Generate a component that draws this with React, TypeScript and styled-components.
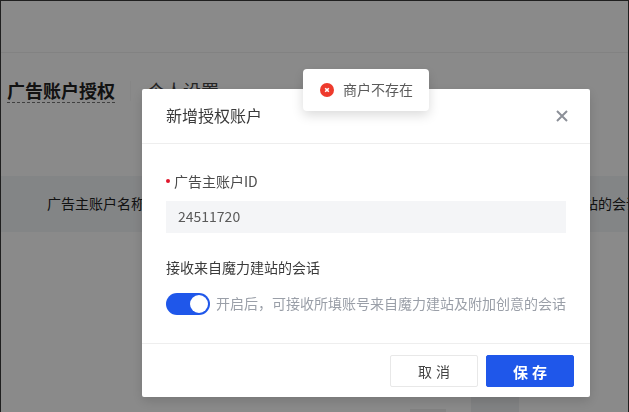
import React from 'react';
import styled, { createGlobalStyle } from 'styled-components';

const GlobalStyle = createGlobalStyle`
  html, body {
    margin: 0;
    padding: 0;
    height: 100%;
    overflow: hidden;
    background: #fff;
    font-family: "Noto Sans CJK SC", "Noto Sans", sans-serif;
  }
  * {
    box-sizing: border-box;
  }
`;

const App: React.FC = () => {
  return (
    <>
      <GlobalStyle />
      <Page>
        <TopBar />
        <Tabs>
          <ActiveTab>广告账户授权</ActiveTab>
          <TabDivider />
          <Tab>个人设置</Tab>
        </Tabs>
        <TableHead>
          <HeadCell>广告主账户名称</HeadCell>
          <HeadCell>接收来自魔力建站的会话</HeadCell>
        </TableHead>
        <Pager>
          <PagerItem />
          <PagerButton />
        </Pager>
      </Page>

      <Overlay />

      <Modal>
        <ModalHeader>
          <ModalTitle>新增授权账户</ModalTitle>
          <CloseButton aria-label="关闭">
            <svg width="12" height="12" viewBox="0 0 12 12" fill="none">
              <path d="M1 1l10 10M11 1L1 11" stroke="#8c9098" strokeWidth="2" />
            </svg>
          </CloseButton>
        </ModalHeader>

        <ModalBody>
          <FieldLabel required>广告主账户ID</FieldLabel>
          <TextInput defaultValue="24511720" />
          <SwitchLabel>接收来自魔力建站的会话</SwitchLabel>
          <SwitchRow>
            <Switch>
              <SwitchThumb />
            </Switch>
            <Hint>开启后，可接收所填账号来自魔力建站及附加创意的会话</Hint>
          </SwitchRow>
        </ModalBody>

        <ModalFooter>
          <Button>取消</Button>
          <Button primary>保存</Button>
        </ModalFooter>
      </Modal>

      <Toast>
        <svg width="14" height="14" viewBox="0 0 14 14">
          <circle cx="7" cy="7" r="7" fill="#ee3a2c" />
          <path d="M5.2 5.2l3.6 3.6M8.8 5.2l-3.6 3.6" stroke="#fff" strokeWidth="1.6" />
        </svg>
        <ToastText>商户不存在</ToastText>
      </Toast>
    </>
  );
};

const Page = styled.div`
  height: 412px;
  overflow: hidden;
  border: 1px solid #3a3a3a;
  border-bottom: none;
  background: #fff;
`;

const TopBar = styled.div`
  height: 52px;
  border-bottom: 1px solid #f0f0f0;
`;

const Tabs = styled.div`
  display: flex;
  align-items: flex-start;
  margin-top: 25px;
  padding-left: 6px;
`;

const ActiveTab = styled.div`
  font-size: 18px;
  line-height: 24px;
  font-weight: 700;
  color: #222;
  border-bottom: 1px dashed #777;
`;

const TabDivider = styled.div`
  width: 1px;
  height: 20px;
  margin: 3px 19px 0 15px;
  background: #f8f8f8;
`;

const Tab = styled.div`
  margin-left: -3px;
  font-size: 18px;
  line-height: 24px;
  color: #444;
`;

const TableHead = styled.div`
  display: grid;
  grid-template-columns: 439px 1fr;
  align-items: center;
  height: 56px;
  margin-top: 73px;
  padding-left: 46px;
  background: #f3f5f8;
`;

const HeadCell = styled.div`
  padding-bottom: 3px;
  font-size: 14px;
  white-space: nowrap;
  color: #222;
`;

const Pager = styled.div`
  display: flex;
  align-items: flex-start;
  margin-top: 165px;
  padding-left: 409px;
`;

const PagerItem = styled.div`
  width: 36px;
  height: 4px;
  margin-top: 12px;
  background: #eeeeee;
`;

const PagerButton = styled.div`
  width: 48px;
  height: 16px;
  margin-left: 25px;
  background: #eff1f3;
`;

const Overlay = styled.div`
  position: fixed;
  inset: 0;
  background: rgba(0, 0, 0, 0.46);
`;

const Modal = styled.div`
  position: fixed;
  left: 142px;
  top: 89px;
  width: 448px;
  background: #fff;
  border-radius: 2px;
  box-shadow: 0 4px 12px rgba(0, 0, 0, 0.15);
`;

const ModalHeader = styled.div`
  display: flex;
  align-items: center;
  justify-content: space-between;
  height: 55px;
  padding: 0 22px 0 24px;
  border-bottom: 1px solid #eeeeee;
`;

const ModalTitle = styled.div`
  padding-bottom: 2px;
  font-size: 16px;
  color: #3a3a3a;
`;

const CloseButton = styled.button`
  display: flex;
  padding: 0;
  border: none;
  background: none;
  cursor: pointer;
`;

const ModalBody = styled.div`
  padding: 27px 24px 28px;
`;

const FieldLabel = styled.div<{ required?: boolean }>`
  display: flex;
  align-items: center;
  font-size: 14px;
  line-height: 20px;
  color: #4a4a4a;

  &::before {
    content: '';
    display: ${({ required }) => (required ? 'block' : 'none')};
    width: 4px;
    height: 4px;
    margin-right: 4px;
    border-radius: 50%;
    background: #e0162b;
  }
`;

const TextInput = styled.input`
  display: block;
  width: 400px;
  height: 32px;
  margin-top: 10px;
  padding: 0 12px 2px;
  border: none;
  outline: none;
  background: #f4f5f7;
  font-family: inherit;
  font-size: 14px;
  color: #5a5a5a;
`;

const SwitchLabel = styled(FieldLabel)`
  margin-top: 24px;
  color: #3a3a3a;
`;

const SwitchRow = styled.div`
  display: flex;
  align-items: center;
  gap: 6px;
  margin-top: 16px;
`;

const Switch = styled.div`
  display: flex;
  align-items: center;
  justify-content: flex-end;
  width: 44px;
  height: 22px;
  padding-right: 2px;
  border-radius: 11px;
  background: #1f57ea;
`;

const SwitchThumb = styled.div`
  width: 18px;
  height: 18px;
  border-radius: 50%;
  background: #fff;
`;

const Hint = styled.div`
  padding-bottom: 2px;
  font-size: 14px;
  line-height: 20px;
  white-space: nowrap;
  color: #9a9fa8;
`;

const ModalFooter = styled.div`
  display: flex;
  justify-content: flex-end;
  gap: 8px;
  padding: 11px 16px 10px;
  border-top: 1px solid #eeeeee;
`;

const Button = styled.button<{ primary?: boolean }>`
  width: 88px;
  height: 32px;
  padding: 0 0 0 4px;
  border: 1px solid ${({ primary }) => (primary ? '#1f57ea' : '#e8e8e8')};
  border-radius: 2px;
  background: ${({ primary }) => (primary ? '#1f57ea' : '#fff')};
  color: ${({ primary }) => (primary ? '#fff' : '#444')};
  font-family: inherit;
  font-size: ${({ primary }) => (primary ? '15px' : '14px')};
  font-weight: ${({ primary }) => (primary ? 700 : 400)};
  letter-spacing: 4px;
  cursor: pointer;
`;

const Toast = styled.div`
  position: fixed;
  left: 303px;
  top: 69px;
  display: flex;
  align-items: center;
  gap: 9px;
  width: 126px;
  height: 42px;
  padding-left: 17px;
  background: #fff;
  border-radius: 4px;
  box-shadow: 0 4px 12px rgba(0, 0, 0, 0.15);
`;

const ToastText = styled.span`
  padding-bottom: 2px;
  font-size: 14px;
  color: #5a5a5a;
`;

export default App;
